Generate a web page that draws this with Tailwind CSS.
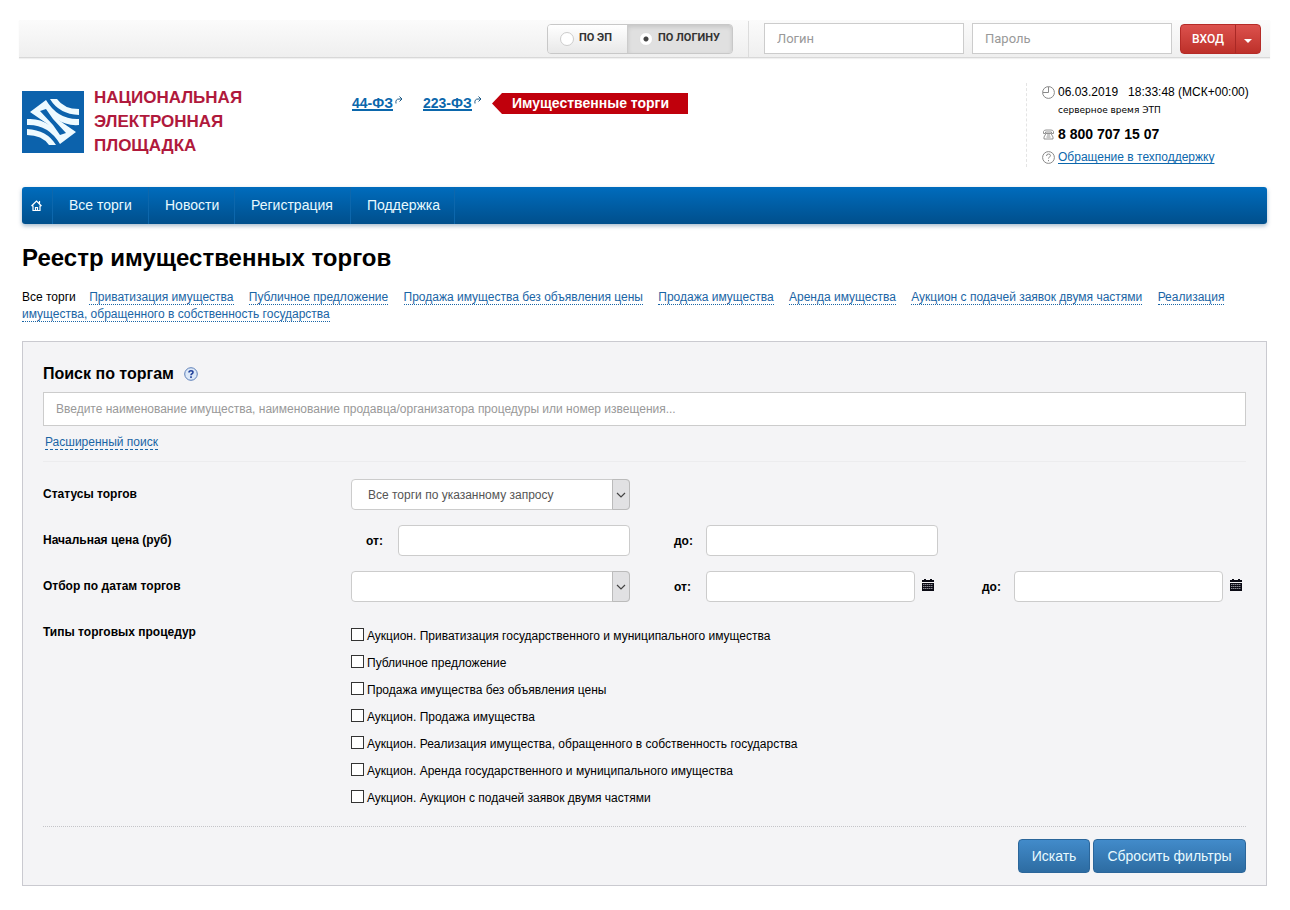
<!DOCTYPE html>
<html lang="ru">
<head>
<meta charset="utf-8">
<meta name="viewport" content="width=device-width, initial-scale=1">
<title>Реестр имущественных торгов</title>
<script src="https://cdn.jsdelivr.net/npm/@tailwindcss/browser@4"></script>
</head>
<body class="bg-white font-['Liberation_Sans',Arial,sans-serif] text-xs text-black">

<div class="ml-[19px] mr-5 mt-5 flex h-[38px] items-center justify-end border-b border-[#d8d8d8] bg-linear-to-b from-[#fbfbfb] to-[#efefef] pr-[9px] shadow-[0_1px_1px_#f0f0f0]">
  <div class="flex h-[30px] w-[186px] overflow-hidden rounded border border-[#c8c8c8] font-['Roboto',sans-serif] text-[11px] font-bold text-[#333]">
    <label class="flex w-[79px] items-center gap-[5px] bg-linear-to-b from-white to-[#e8e8e8] pl-3">
      <input type="radio" name="auth" class="size-3.5 appearance-none rounded-full border border-[#ccc] bg-white">ПО ЭП
    </label>
    <label class="flex flex-1 items-center gap-[5px] border-l border-[#ccc] bg-[#e0e0e0] pl-[11px] shadow-[inset_0_2px_4px_rgba(0,0,0,0.12)]">
      <input type="radio" name="auth" checked class="size-3.5 appearance-none rounded-full border border-[#ddd] bg-white bg-[radial-gradient(circle,#444_0_2px,#fff_3px)]">ПО ЛОГИНУ
    </label>
  </div>
  <div class="mr-[15px] ml-[15px] h-9 w-px bg-[#dcdcdc]"></div>
  <input type="text" aria-label="Логин" placeholder="Логин" class="h-[31px] w-[200px] border border-[#ccc] bg-white px-3 font-['Roboto',sans-serif] text-[13px] placeholder:text-[#999]">
  <input type="password" aria-label="Пароль" placeholder="Пароль" class="ml-2 h-[31px] w-[200px] border border-[#ccc] bg-white px-3 font-['Roboto',sans-serif] text-[13px] placeholder:text-[#999]">
  <div class="ml-2 flex h-[30px] w-[81px] overflow-hidden rounded border border-[#b52b27] bg-linear-to-b from-[#dc514d] to-[#bd3029] text-white">
    <button type="button" class="flex-1 font-['Roboto',sans-serif] font-medium">ВХОД</button>
    <button type="button" aria-label="Способы входа" class="flex w-[25px] items-center justify-center border-l border-[#a92825]">
      <svg width="8" height="4" viewBox="0 0 8 4" class="mt-1"><path d="M0 0h8L4 4z" fill="#fff"/></svg>
    </button>
  </div>
</div>

<div class="mr-[23px] ml-[22px]">
  <header class="flex h-[129px] items-start">
    <a href="#" class="mt-[33px] flex w-[330px] gap-2.5">
      <svg width="62" height="62" viewBox="0 0 62 62">
        <rect width="62" height="62" fill="#0c62ac"/>
        <g fill="#eefaff">
          <path d="M28 8h7Q42 18 57 18v6Q37 23 28 8z"/>
          <path d="M34 54h-7Q20 44 5 44v-6Q25 39 34 54z"/>
          <path fill-rule="evenodd" d="M8 21L24 9Q36 29 57 28v6Q44 35 35 28L54 41 38 53Q26 33 5 34V28Q18 27 27 34zM18 20L31 34 38 44 44 42 31 28 24 18z"/>
        </g>
      </svg>
      <span class="-mt-[5px] text-[17px] leading-6 font-bold text-[#b0193c]">НАЦИОНАЛЬНАЯ<br>ЭЛЕКТРОННАЯ<br>ПЛОЩАДКА</span>
    </a>
    <nav aria-label="Секции" class="mt-[35px] flex text-sm font-bold text-[#0b67ac]">
      <a href="#" class="flex w-[71px] gap-0.5"><span class="h-[18px] border-b-2 border-[#0b67ac] leading-5">44-ФЗ</span><svg width="8" height="8" viewBox="0 0 8 8" class="mt-[3px]" fill="none" stroke="#1d5a86"><path d="M1 7.500Q.2 3 4 3H6.500M4.500.5L7 3 4.500 5.500"/></svg></a>
      <a href="#" class="flex w-[69px] gap-0.5"><span class="h-[18px] border-b-2 border-[#0b67ac] leading-5">223-ФЗ</span><svg width="8" height="8" viewBox="0 0 8 8" class="mt-[3px]" fill="none" stroke="#1d5a86"><path d="M1 7.500Q.2 3 4 3H6.500M4.500.5L7 3 4.500 5.500"/></svg></a>
      <a href="#" class="h-[21px] w-[196px] bg-[#c0000c] pl-5 leading-[21px] text-white [clip-path:polygon(0_50%,10px_0,100%_0,100%_100%,10px_100%)]">Имущественные торги</a>
    </nav>
    <div class="mt-[25px] ml-auto flex h-[84px] w-[241px] flex-col border-l border-dashed border-[#e4e4e4] pl-[15px]">
      <div class="flex h-[18px] items-center gap-[3px] whitespace-pre"><svg width="13" height="13" viewBox="0 0 13 13" fill="none" stroke="#888"><circle cx="6.500" cy="6.500" r="5.900"/><path d="M6.500 1v5.500H1"/></svg><span>06.03.2019   18:33:48 (МСК+00:00)</span></div>
      <div class="h-6 pl-4 font-['DejaVu_Sans',sans-serif] text-[9px] leading-[18px]">серверное время ЭТП</div>
      <div class="flex h-[18px] items-center gap-[3px] text-sm font-bold"><svg width="13" height="11" viewBox="0 0 13 11" fill="none" stroke="#888" stroke-width=".9"><path d="M1.500 4.500V2.500Q2 1 4 1h5q2 0 2.500 1.500v2h-2V3h-6v1.500zM4 4.500h5l2 3.500v2H2V8zM5 6h3M4.500 8h4"/></svg>8 800 707 15 07</div>
      <div class="mt-[5px] flex h-[18px] items-center gap-[3px]"><svg width="13" height="13" viewBox="0 0 13 13" fill="none" stroke="#888"><circle cx="6.500" cy="6.500" r="5.900"/><path d="M4.500 5q0-2 2-2t2 1.700q0 .8-1 1.300t-1 1.500M6.500 9v1.200"/></svg><a href="#" class="text-[#0b67ac] underline underline-offset-2">Обращение в техподдержку</a></div>
    </div>
  </header>

  <nav aria-label="Главное меню" class="flex h-[37px] rounded-[3px] bg-linear-to-b from-[#006cbd] to-[#004f8c] text-sm leading-9 text-[#e8faff] shadow-[0_2px_4px_rgba(0,60,110,0.35)]">
    <a href="#" aria-label="Главная" class="flex w-[31px] items-center border-r border-[#0d67ac] pl-[9px]"><svg width="11" height="11" viewBox="0 0 11 11" fill="none" stroke="#fff" stroke-width="1.200"><path d="M.5 6l5-5 5 5M2 5.500v5h7v-5M4.500 10.500v-3h2v3M8.500 1v3"/></svg></a>
    <a href="#" class="w-24 border-r border-[#0d67ac] pl-4">Все торги</a>
    <a href="#" class="w-[86px] border-r border-[#0d67ac] pl-4">Новости</a>
    <a href="#" class="w-[116px] border-r border-[#0d67ac] pl-4">Регистрация</a>
    <a href="#" class="w-[104px] border-r border-[#0d67ac] pl-4">Поддержка</a>
  </nav>

  <h1 class="mt-5 text-2xl leading-7 font-bold">Реестр имущественных торгов</h1>

  <nav aria-label="Виды торгов" class="mt-[17px] mr-4 leading-[17px] text-[#1a65a5] [&_a]:mr-3 [&_a]:border-b [&_a]:border-dotted [&_a]:border-[#1a65a5]">
    <span class="mr-2.5 text-black">Все торги</span>
    <a href="#">Приватизация имущества</a>
    <a href="#">Публичное предложение</a>
    <a href="#">Продажа имущества без объявления цены</a>
    <a href="#">Продажа имущества</a>
    <a href="#">Аренда имущества</a>
    <a href="#">Аукцион с подачей заявок двумя частями</a>
    <a href="#">Реализация имущества, обращенного в собственность государства</a>
  </nav>

  <form class="mt-[18px] border border-[#cacad0] bg-[#f4f4f6] px-5 pt-[22px] pb-3">
    <div class="flex h-5 items-center gap-2.5">
      <h2 class="text-base font-bold"><label for="q">Поиск по торгам</label></h2>
      <svg width="14" height="14" viewBox="0 0 14 14"><circle cx="7" cy="7" r="6.300" fill="#dce8f8" stroke="#5d7fb8"/><path d="M5 5.500Q5 3.700 7 3.700T9 5.300Q9 6.200 8 6.700T7 8.300M7 9.300V11" fill="none" stroke="#1f3f9a" stroke-width="1.600"/></svg>
    </div>
    <input id="q" type="text" placeholder="Введите наименование имущества, наименование продавца/организатора процедуры или номер извещения..." class="mt-2 block h-[34px] w-full border border-[#ccc] bg-white px-3 text-xs placeholder:text-[#999]">
    <div class="mt-2 h-7 border-b border-[#ececee] pl-0.5 leading-4"><a href="#" class="border-b border-dashed border-[#1a65a5] text-[#1a65a5]">Расширенный поиск</a></div>

    <div class="mt-[17px] grid grid-cols-4 gap-x-[29px] gap-y-[15px]">
      <label for="st" class="pt-2 leading-[14px] font-bold">Статусы торгов</label>
      <div class="relative col-start-2">
        <select id="st" class="h-[31px] w-full appearance-none rounded border border-[#ccc] bg-white pl-4 text-xs text-[#555]"><option>Все торги по указанному запросу</option></select>
        <span class="pointer-events-none absolute inset-y-0 right-0 flex w-[18px] items-center justify-center rounded-r-sm border border-[#bbb] bg-[#e1e1e3]"><svg width="10" height="6" viewBox="0 0 10 6" fill="none" stroke="#444" stroke-width="1.200"><path d="M1 1l4 4 4-4"/></svg></span>
      </div>

      <span class="col-start-1 pt-2 leading-[14px] font-bold">Начальная цена (руб)</span>
      <div class="flex items-center"><label for="p1" class="w-[47px] shrink-0 pl-[15px] font-bold">от:</label><input id="p1" type="text" class="h-[31px] min-w-0 flex-1 rounded border border-[#ccc] bg-white px-3"></div>
      <div class="flex items-center"><label for="p2" class="w-[47px] shrink-0 pl-[15px] font-bold">до:</label><input id="p2" type="text" class="h-[31px] min-w-0 flex-1 rounded border border-[#ccc] bg-white px-3"></div>

      <label for="dt" class="col-start-1 pt-2 leading-[14px] font-bold">Отбор по датам торгов</label>
      <div class="relative">
        <select id="dt" class="h-[31px] w-full appearance-none rounded border border-[#ccc] bg-white pl-4 text-xs text-[#555]"><option></option></select>
        <span class="pointer-events-none absolute inset-y-0 right-0 flex w-[18px] items-center justify-center rounded-r-sm border border-[#bbb] bg-[#e1e1e3]"><svg width="10" height="6" viewBox="0 0 10 6" fill="none" stroke="#444" stroke-width="1.200"><path d="M1 1l4 4 4-4"/></svg></span>
      </div>
      <div class="flex items-center"><label for="d1" class="w-[47px] shrink-0 pl-[15px] font-bold">от:</label><input id="d1" type="text" class="h-[31px] min-w-0 flex-1 rounded border border-[#ccc] bg-white px-3"><button type="button" aria-label="Календарь" class="mr-1 mb-1 ml-[7px]"><svg width="12" height="12" viewBox="0 0 12 12" fill="#0a0a14"><path d="M0 1h2V0h2v1h4V0h2v1h2v2H0zM0 4h12v8H0z"/><path d="M1 5.500h10M1 7.500h10M1 9.500h10" stroke="#c4c4cc" stroke-width=".7" stroke-dasharray="1.500 .5"/></svg></button></div>
      <div class="flex items-center"><label for="d2" class="w-[47px] shrink-0 pl-[15px] font-bold">до:</label><input id="d2" type="text" class="h-[31px] min-w-0 flex-1 rounded border border-[#ccc] bg-white px-3"><button type="button" aria-label="Календарь" class="mr-1 mb-1 ml-[7px]"><svg width="12" height="12" viewBox="0 0 12 12" fill="#0a0a14"><path d="M0 1h2V0h2v1h4V0h2v1h2v2H0zM0 4h12v8H0z"/><path d="M1 5.500h10M1 7.500h10M1 9.500h10" stroke="#c4c4cc" stroke-width=".7" stroke-dasharray="1.500 .5"/></svg></button></div>

      <span class="col-start-1 pt-2 leading-[14px] font-bold">Типы торговых процедур</span>
      <div class="col-span-3 flex flex-col gap-[7px] pt-[9px] leading-5 [&_input]:mt-0.5 [&_input]:size-[13px] [&_input]:appearance-none [&_input]:border [&_input]:border-[#333] [&_input]:bg-white [&_label]:flex [&_label]:gap-[3px]">
        <label><input type="checkbox">Аукцион. Приватизация государственного и муниципального имущества</label>
        <label><input type="checkbox">Публичное предложение</label>
        <label><input type="checkbox">Продажа имущества без объявления цены</label>
        <label><input type="checkbox">Аукцион. Продажа имущества</label>
        <label><input type="checkbox">Аукцион. Реализация имущества, обращенного в собственность государства</label>
        <label><input type="checkbox">Аукцион. Аренда государственного и муниципального имущества</label>
        <label><input type="checkbox">Аукцион. Аукцион с подачей заявок двумя частями</label>
      </div>
    </div>

    <div class="mt-[18px] flex justify-end gap-[3px] border-t border-dotted border-[#c4c4c8] pt-3 text-sm text-[#e8faff]">
      <button type="submit" class="h-[34px] w-[72px] rounded border border-[#2b669a] bg-linear-to-b from-[#428bca] to-[#2d6ca2]">Искать</button>
      <button type="reset" class="h-[34px] w-[153px] rounded border border-[#2b669a] bg-linear-to-b from-[#428bca] to-[#2d6ca2]">Сбросить фильтры</button>
    </div>
  </form>
</div>
</body>
</html>
